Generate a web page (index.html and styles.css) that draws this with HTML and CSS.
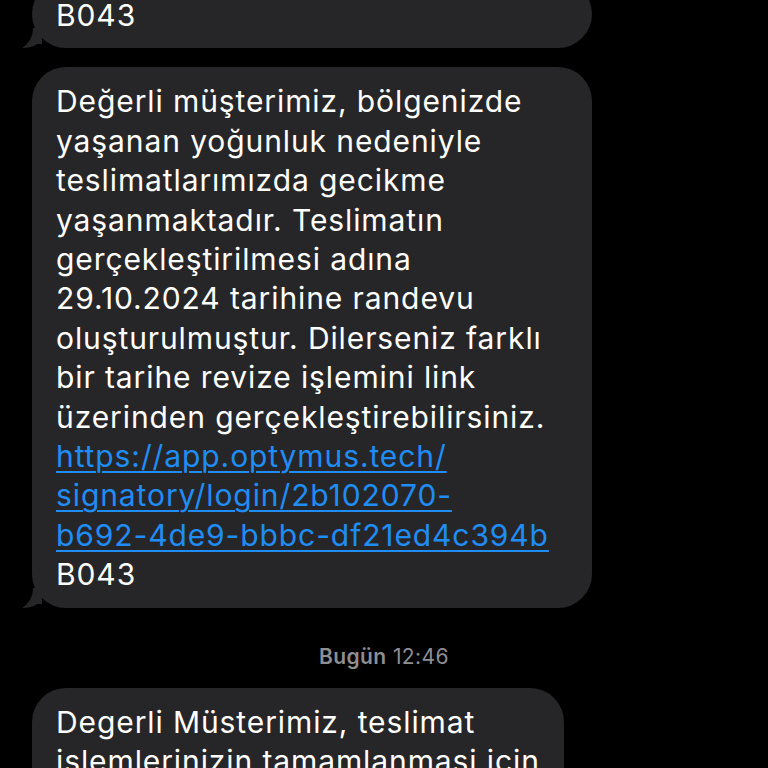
FILE: index.html
```html
<!DOCTYPE html>
<html lang="tr">
<head>
<meta charset="utf-8">
<link rel="stylesheet" href="styles.css">
</head>
<body>
<div class="thread">
  <div class="bubble bubble-wide bubble-first">
    <div class="text">B043</div>
    <svg class="tail" viewBox="0 0 20 20" width="20" height="20"><path d="M11 0 C11 10 6 16 0 20 C6 20 11 19 15 16 L20 16 L20 0 Z"/></svg>
  </div>
  <div class="bubble bubble-wide">
    <div class="text">Değerli müşterimiz, bölgenizde<br>yaşanan yoğunluk nedeniyle<br>teslimatlarımızda gecikme<br>yaşanmaktadır. Teslimatın<br>gerçekleştirilmesi adına<br>29.10.2024 tarihine randevu<br>oluşturulmuştur. Dilerseniz farklı<br>bir tarihe revize işlemini link<br>üzerinden gerçekleştirebilirsiniz.<br><a class="link" href="#">https://app.optymus.tech/<br>signatory/login/2b102070-<br>b692-4de9-bbbc-df21ed4c394b</a><br>B043</div>
    <svg class="tail" viewBox="0 0 20 20" width="20" height="20"><path d="M11 0 C11 10 6 16 0 20 C6 20 11 19 15 16 L20 16 L20 0 Z"/></svg>
  </div>
  <div class="stamp"><span class="stamp-day">Bugün</span> 12:46</div>
  <div class="bubble bubble-narrow">
    <div class="text">Degerli Müsterimiz, teslimat<br>islemlerinizin tamamlanmasi için<br>lütfen bilgilerinizi güncelleyiniz.</div>
  </div>
</div>
</body>
</html>
```

FILE: styles.css
```css
html, body {
  margin: 0;
  padding: 0;
  background: #000;
  height: 768px;
  overflow: hidden;
}
body {
  font-family: Inter, "Noto Sans", "Liberation Sans", sans-serif;
  color: #fff;
}
.thread {
  display: flex;
  flex-direction: column;
  align-items: flex-start;
  padding-left: 32px;
  margin-top: -20px;
}
.bubble {
  position: relative;
  background: #262628;
  border-radius: 34px;
  padding: 15px 23px 13px 24px;
  box-sizing: border-box;
}
.bubble-wide {
  width: 560px;
  margin-bottom: 19px;
}
.bubble-first {
  padding-top: 16px;
}
.bubble-narrow {
  width: 532px;
}
.text {
  font-size: 30px;
  line-height: 39.4px;
  letter-spacing: 0.9px;
  white-space: nowrap;
}
.link {
  color: #1f8df4;
  text-decoration: underline;
  text-decoration-thickness: 2px;
  text-underline-offset: 4px;
}
.tail {
  position: absolute;
  left: -10px;
  bottom: 0;
  fill: #262628;
}
.stamp {
  align-self: center;
  margin-left: -32px;
  font-size: 21px;
  line-height: 24px;
  letter-spacing: 0.4px;
  color: #8e8e93;
  margin-top: 18px;
  margin-bottom: 19px;
}
.stamp-day {
  font-weight: 600;
}
```
